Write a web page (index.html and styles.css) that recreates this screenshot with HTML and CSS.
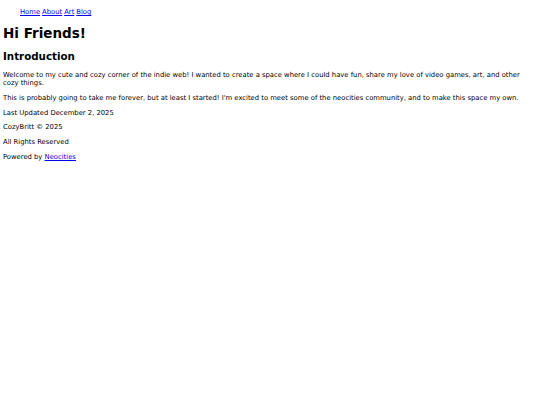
FILE: index.html
```html
<!DOCTYPE html>
<html>
<head>
<meta charset="utf-8">
<title>CozyBritt</title>
<link rel="stylesheet" href="styles.css">
</head>
<body>
<nav class="nav">
  <ul class="nav-list">
    <li><a href="#">Home</a></li>
    <li><a href="#">About</a></li>
    <li><a href="#">Art</a></li>
    <li><a href="#">Blog</a></li>
  </ul>
</nav>
<main>
  <h1 class="title">Hi Friends!</h1>
  <h2 class="subtitle">Introduction</h2>
  <p class="text">Welcome to my cute and cozy corner of the indie web! I wanted to create a space where I could have fun, share my love of video games, art, and other cozy things.</p>
  <p class="text">This is probably going to take me forever, but at least I started! I'm excited to meet some of the neocities community, and to make this space my own.</p>
  <p class="text">Last Updated December 2, 2025</p>
</main>
<footer>
  <p class="text">CozyBritt &copy; 2025</p>
  <p class="text">All Rights Reserved</p>
  <p class="text">Powered by <a href="#">Neocities</a></p>
</footer>
</body>
</html>
```
FILE: styles.css
```css
html, body {
  background: #ffffff;
}
body {
  margin: 4px 4px 4px 3px;
  font-family: "DejaVu Sans", Verdana, sans-serif;
  color: #000;
}
.nav-list {
  list-style: none;
  margin: 4px 0 0;
  padding: 0 0 0 17px;
  display: flex;
  gap: 2px;
  font-size: 6.8px;
  line-height: 8px;
}
.nav-list a {
  color: #0000ee;
}
.title {
  font-size: 13.5px;
  line-height: 16px;
  margin: 9px 0 9px;
}
.subtitle {
  font-size: 10.3px;
  line-height: 12px;
  margin: 9px 0 9px;
}
.text {
  font-size: 6.8px;
  line-height: 8px;
  margin: 6.75px 0;
}
.text a {
  color: #0000ee;
}
```
